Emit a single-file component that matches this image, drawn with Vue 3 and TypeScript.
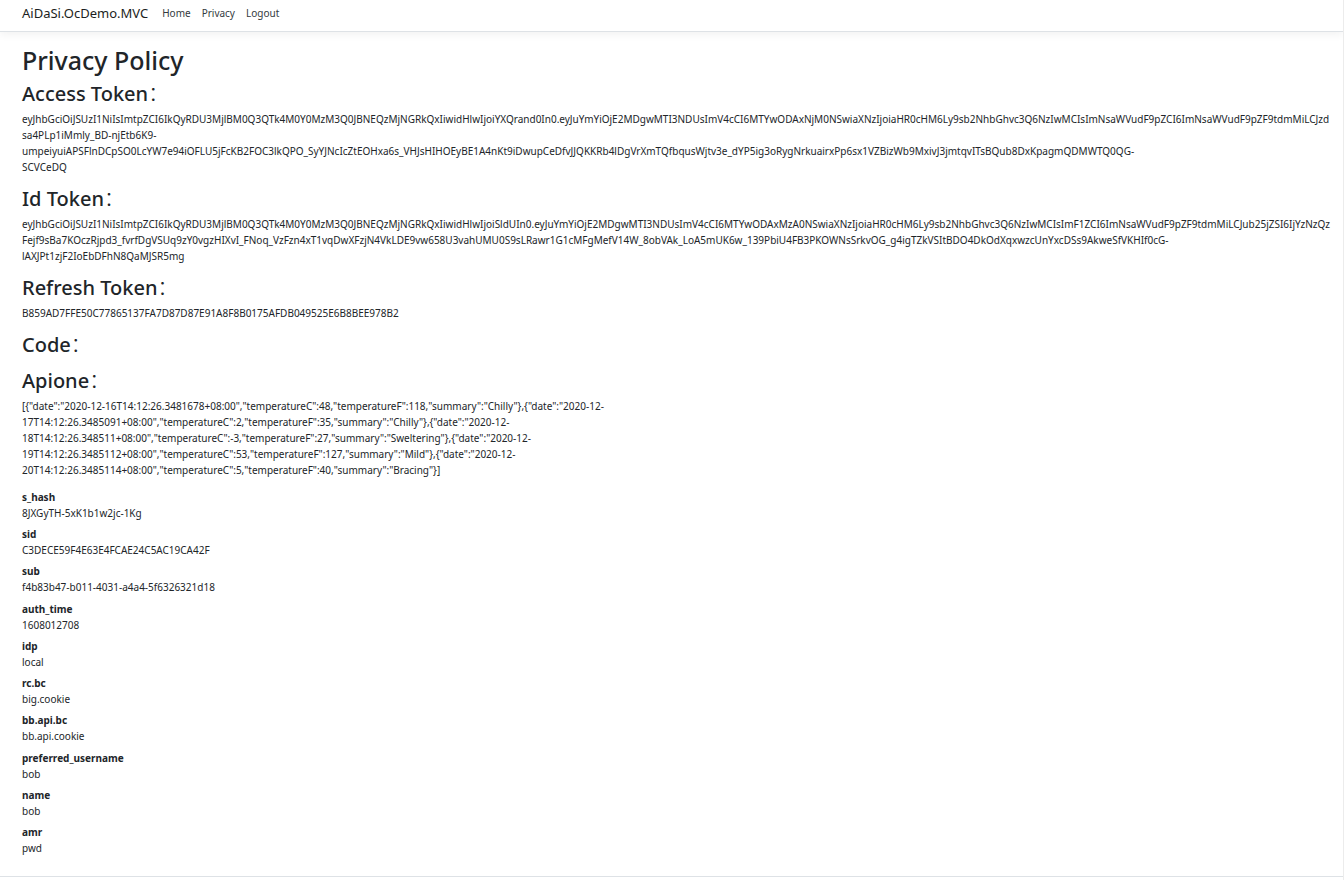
<script setup lang="ts">
interface Section {
  title: string
  lines: string[]
}

interface Claim {
  type: string
  value: string
}

const links: string[] = ['Home', 'Privacy', 'Logout']

const sections: Section[] = [
  {
    title: 'Access Token',
    lines: [
      'eyJhbGciOiJSUzI1NiIsImtpZCI6IkQyRDU3MjlBM0Q3QTk4M0Y0MzM3Q0JBNEQzMjNGRkQxIiwidHlwIjoiYXQrand0In0.eyJuYmYiOjE2MDgwMTI3NDUsImV4cCI6MTYwODAxNjM0NSwiaXNzIjoiaHR0cHM6Ly9sb2NhbGhvc3Q6NzIwMCIsImNsaWVudF9pZCI6ImNsaWVudF9pZF9tdmMiLCJzd',
      'sa4PLp1iMmly_BD-njEtb6K9-',
      'umpeiyuiAPSFlnDCpSO0LcYW7e94iOFLU5jFcKB2FOC3lkQPO_SyYJNcIcZtEOHxa6s_VHJsHIHOEyBE1A4nKt9iDwupCeDfvJJQKKRb4lDgVrXmTQfbqusWjtv3e_dYP5ig3oRygNrkuairxPp6sx1VZBizWb9MxivJ3jmtqvITsBQub8DxKpagmQDMWTQ0QG-',
      'SCVCeDQ'
    ]
  },
  {
    title: 'Id Token',
    lines: [
      'eyJhbGciOiJSUzI1NiIsImtpZCI6IkQyRDU3MjlBM0Q3QTk4M0Y0MzM3Q0JBNEQzMjNGRkQxIiwidHlwIjoiSldUIn0.eyJuYmYiOjE2MDgwMTI3NDUsImV4cCI6MTYwODAxMzA0NSwiaXNzIjoiaHR0cHM6Ly9sb2NhbGhvc3Q6NzIwMCIsImF1ZCI6ImNsaWVudF9pZF9tdmMiLCJub25jZSI6IjYzNzQz',
      'Fejf9sBa7KOczRjpd3_fvrfDgVSUq9zY0vgzHIXvI_FNoq_VzFzn4xT1vqDwXFzjN4VkLDE9vw658U3vahUMU0S9sLRawr1G1cMFgMefV14W_8obVAk_LoA5mUK6w_139PbiU4FB3PKOWNsSrkvOG_g4igTZkVSItBDO4DkOdXqxwzcUnYxcDSs9AkweSfVKHIf0cG-',
      'lAXJPt1zjF2IoEbDFhN8QaMJSR5mg'
    ]
  },
  {
    title: 'Refresh Token',
    lines: ['B859AD7FFE50C77865137FA7D87D87E91A8F8B0175AFDB049525E6B8BEE978B2']
  },
  { title: 'Code', lines: [] },
  {
    title: 'Apione',
    lines: [
      '[{"date":"2020-12-16T14:12:26.3481678+08:00","temperatureC":48,"temperatureF":118,"summary":"Chilly"},{"date":"2020-12-',
      '17T14:12:26.3485091+08:00","temperatureC":2,"temperatureF":35,"summary":"Chilly"},{"date":"2020-12-',
      '18T14:12:26.348511+08:00","temperatureC":-3,"temperatureF":27,"summary":"Sweltering"},{"date":"2020-12-',
      '19T14:12:26.3485112+08:00","temperatureC":53,"temperatureF":127,"summary":"Mild"},{"date":"2020-12-',
      '20T14:12:26.3485114+08:00","temperatureC":5,"temperatureF":40,"summary":"Bracing"}]'
    ]
  }
]

const claims: Claim[] = [
  { type: 's_hash', value: '8JXGyTH-5xK1b1w2jc-1Kg' },
  { type: 'sid', value: 'C3DECE59F4E63E4FCAE24C5AC19CA42F' },
  { type: 'sub', value: 'f4b83b47-b011-4031-a4a4-5f6326321d18' },
  { type: 'auth_time', value: '1608012708' },
  { type: 'idp', value: 'local' },
  { type: 'rc.bc', value: 'big.cookie' },
  { type: 'bb.api.bc', value: 'bb.api.cookie' },
  { type: 'preferred_username', value: 'bob' },
  { type: 'name', value: 'bob' },
  { type: 'amr', value: 'pwd' }
]
</script>

<template>
  <div class="page">
    <header class="header">
      <nav class="nav">
        <a class="brand" href="#">AiDaSi.OcDemo.MVC</a>
        <a v-for="link in links" :key="link" class="link" href="#">{{ link }}</a>
      </nav>
    </header>

    <main class="main">
      <h1>Privacy Policy</h1>
      <section v-for="section in sections" :key="section.title" class="section">
        <h2>{{ section.title }}<span class="colon">：</span></h2>
        <p v-if="section.lines.length" class="text">{{ section.lines.join('\n') }}</p>
      </section>

      <dl class="claims">
        <div v-for="claim in claims" :key="claim.type">
          <dt>{{ claim.type }}</dt>
          <dd>{{ claim.value }}</dd>
        </div>
      </dl>
    </main>

    <footer class="footer"></footer>
  </div>
</template>

<style>
body {
  margin: 0;
  background: #fff;
}
</style>

<style scoped>
.page {
  box-sizing: border-box;
  min-height: 100vh;
  display: flex;
  flex-direction: column;
  overflow: hidden;
  border-right: 1px solid #ececec;
  color: #212529;
  font-family: "Noto Sans", "Noto Sans CJK SC", sans-serif;
  font-size: 10px;
  line-height: 16px;
}

.header {
  border-bottom: 1px solid #dee2e6;
  box-shadow: 0 3px 8px rgba(0, 0, 0, 0.05);
}

.nav {
  display: flex;
  align-items: center;
  gap: 11px;
  padding: 1px 22px 6px;
  line-height: 24px;
}

.nav a {
  text-decoration: none;
}

.brand {
  margin-right: 3px;
  color: #1b1e21;
  font-size: 13px;
}

.link {
  color: #343a40;
}

.main {
  flex: 1;
  display: flex;
  flex-direction: column;
  padding: 12px 0 20px 22px;
}

h1,
h2,
p,
dl,
dd {
  margin: 0;
}

h1 {
  margin-bottom: 5px;
  font-size: 25px;
  font-weight: 500;
  line-height: 32px;
}

h2 {
  margin-bottom: 4px;
  font-size: 20px;
  font-weight: 500;
  line-height: 26px;
}

.colon {
  font-weight: 300;
}

.section {
  padding-bottom: 6px;
}

.text {
  padding-bottom: 5px;
  white-space: pre;
}

.claims {
  flex: 1;
  display: flex;
  flex-direction: column;
  justify-content: space-between;
}

dt {
  font-weight: 700;
}

.footer {
  height: 3px;
  border-top: 1px solid #dee2e6;
}
</style>
